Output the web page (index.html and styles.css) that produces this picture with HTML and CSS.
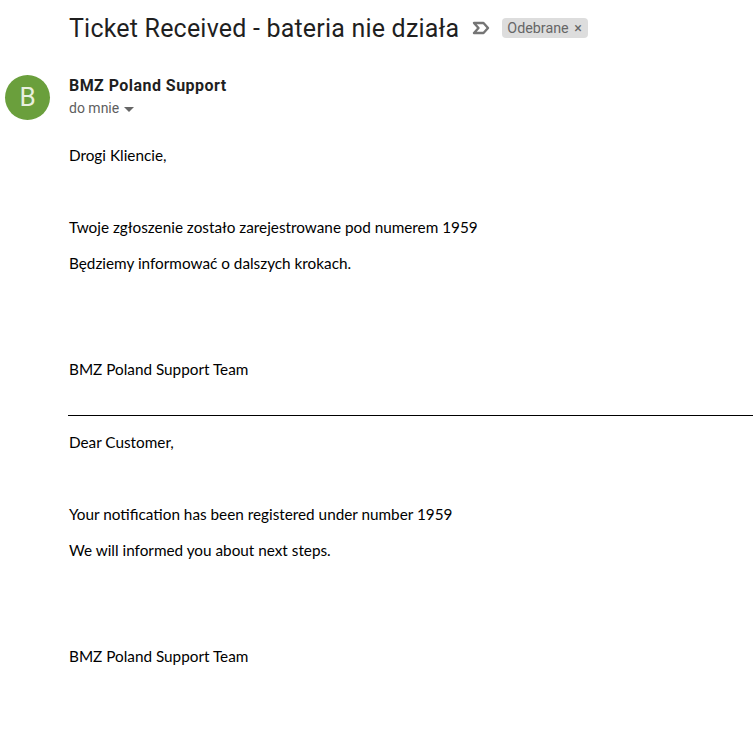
FILE: index.html
```html
<!DOCTYPE html>
<html lang="en">
<head>
  <meta charset="UTF-8" />
  <title>Ticket Received - bateria nie działa</title>
  <link rel="stylesheet" href="styles.css">
</head>
<body>
  <div class="subject-row">
    <h1 class="subject">Ticket Received - bateria nie działa</h1>
    <svg class="important" width="18" height="14" viewBox="0 0 18 14">
      <path d="M2 2h9.5l4.5 5-4.5 5H2l4.5-5z" fill="none" stroke="#757575" stroke-width="2.4" stroke-linejoin="round"/>
    </svg>
    <span class="label">Odebrane <span class="label-x">×</span></span>
  </div>

  <div class="message">
    <div class="avatar">B</div>
    <div class="message-main">
      <div class="sender">BMZ Poland Support</div>
      <div class="to">do mnie <span class="caret"></span></div>

      <div class="content">
        <p class="line first">Drogi Kliencie,</p>
        <p class="line gap-1">Twoje zgłoszenie zostało zarejestrowane pod numerem 1959</p>
        <p class="line">Będziemy informować o dalszych krokach.</p>
        <p class="line gap-2">BMZ Poland Support Team</p>
        <hr class="divider">
        <p class="line">Dear Customer,</p>
        <p class="line gap-1">Your notification has been registered under number 1959</p>
        <p class="line">We will informed you about next steps.</p>
        <p class="line gap-2">BMZ Poland Support Team</p>
      </div>
    </div>
  </div>
</body>
</html>
```

FILE: styles.css
```css
* { box-sizing: border-box; }

body {
  margin: 0;
  height: 737px;
  overflow: hidden;
  background: #fff;
  color: #000;
  font-family: "Lato", "Liberation Sans", sans-serif;
}

.subject-row {
  display: flex;
  align-items: center;
  height: 56px;
  padding-left: 69px;
}

.subject {
  margin: 0;
  font-family: "Roboto", "Liberation Sans", sans-serif;
  font-size: 25px;
  font-weight: 400;
  letter-spacing: 0.2px;
  color: #1f1f1f;
}

.important {
  margin-left: 13px;
}

.label {
  margin-left: 12px;
  padding: 0 6px 0 5px;
  height: 20px;
  line-height: 20px;
  border-radius: 4px;
  background: #dddddd;
  color: #666;
  font-family: "Roboto", "Liberation Sans", sans-serif;
  font-size: 14.3px;
}

.label-x {
  margin-left: 2px;
}

.message {
  display: flex;
  padding: 18px 0 0 5px;
}

.avatar {
  flex: none;
  width: 45px;
  height: 45px;
  margin: 1px 19px 0 0;
  border-radius: 50%;
  background: #6a9f3c;
  color: #e8f0df;
  font-family: "Roboto", "Liberation Sans", sans-serif;
  font-size: 26px;
  font-weight: 400;
  line-height: 45px;
  text-align: center;
}

.message-main {
  flex: 1;
  min-width: 0;
}

.sender {
  font-family: "Roboto", "Liberation Sans", sans-serif;
  font-size: 16px;
  font-weight: 700;
  letter-spacing: 0.45px;
  color: #1f1f1f;
  line-height: 24px;
}

.to {
  font-family: "Roboto", "Liberation Sans", sans-serif;
  font-size: 14px;
  color: #5e5e5e;
  line-height: 21px;
}

.caret {
  display: inline-block;
  margin-left: 1px;
  vertical-align: middle;
  border-left: 5px solid transparent;
  border-right: 5px solid transparent;
  border-top: 5px solid #666;
}

.content {
  padding-top: 26px;
}

.line {
  margin: 0 0 15px;
  font-size: 15.3px;
  line-height: 21px;
}

.line.gap-1 {
  margin-top: 51px;
}

.line.gap-2 {
  margin-top: 85px;
}

.divider {
  margin: 35px 0 16px -1px;
  border: 0;
  border-top: 1px solid #000;
}
```
